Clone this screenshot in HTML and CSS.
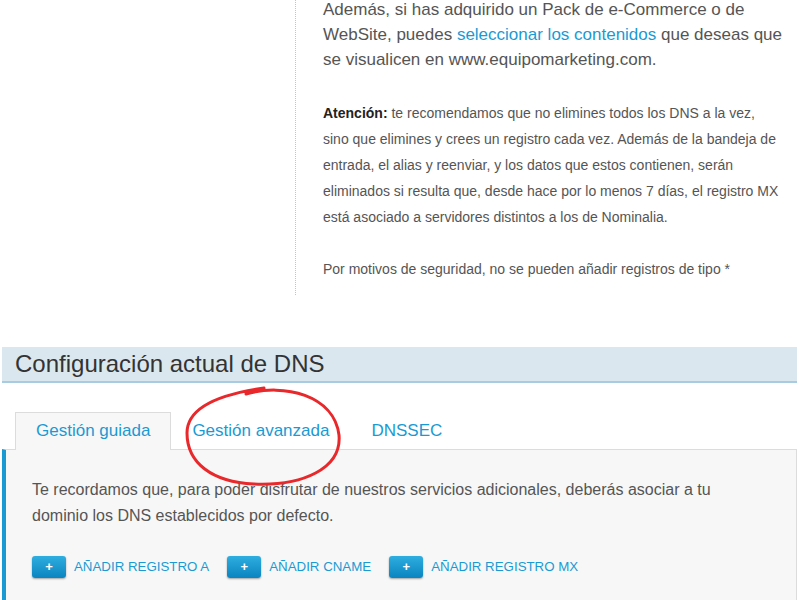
FILE: index.html
```html
<!DOCTYPE html>
<html lang="es">
<head>
  <meta charset="UTF-8" />
  <title>Configuración actual de DNS</title>
  <link rel="stylesheet" href="styles.css">
</head>
<body>

  <div class="intro">
    <div class="intro-side"></div>
    <div class="intro-text">
      <p class="lead">Además, si has adquirido un Pack de e-Commerce o de WebSite, puedes <a href="#">seleccionar los contenidos</a> que deseas que se visualicen en www.equipomarketing.com.</p>
      <p class="note"><b>Atención:</b> te recomendamos que no elimines todos los DNS a la vez, sino que elimines y crees un registro cada vez. Además de la bandeja de entrada, el alias y reenviar, y los datos que estos contienen, serán eliminados si resulta que, desde hace por lo menos 7 días, el registro MX está asociado a servidores distintos a los de Nominalia.</p>
      <p class="note">Por motivos de seguridad, no se pueden añadir registros de tipo *</p>
    </div>
  </div>

  <div class="dns">
    <h2 class="dns-title">Configuración actual de DNS</h2>

    <ul class="tabs">
      <li class="tab active"><a href="#">Gestión guiada</a></li>
      <li class="tab"><a href="#">Gestión avanzada</a></li>
      <li class="tab"><a href="#">DNSSEC</a></li>
    </ul>

    <div class="panel">
      <p>Te recordamos que, para poder disfrutar de nuestros servicios adicionales, deberás asociar a tu dominio los DNS establecidos por defecto.</p>
      <div class="actions">
        <a class="add" href="#"><span class="plus">+</span>Añadir registro A</a>
        <a class="add" href="#"><span class="plus">+</span>Añadir CNAME</a>
        <a class="add" href="#"><span class="plus">+</span>Añadir registro MX</a>
      </div>
    </div>

    <!-- hand drawn highlight -->
    <svg class="scribble" width="170" height="110" viewBox="0 0 170 110">
      <path d="M62 9 C 100 -2, 150 10, 155 50 C 158 84, 118 101, 70 99 C 28 97, 3 78, 3 48 C 3 24, 30 10, 80 3" fill="none" stroke="#e8282b" stroke-width="3" stroke-linecap="round"/>
    </svg>
  </div>

</body>
</html>
```

FILE: styles.css
```css
* {
  box-sizing: border-box;
  margin: 0;
  padding: 0;
}

body {
  font-family: 'Liberation Sans', Arial, sans-serif;
  color: #555;
  background: #fff;
  width: 800px;
  height: 600px;
  overflow: hidden;
}

a {
  color: #1a9ad3;
  text-decoration: none;
}

/* Top block with dotted divider */
.intro {
  display: flex;
  height: 295px;
}

.intro-side {
  width: 296px;
  border-right: 1px dotted #c4c4c4;
}

.intro-text {
  width: 500px;
  padding-left: 27px;
  margin-top: -3px;
}

.lead {
  font-size: 17px;
  line-height: 25px;
  margin-bottom: 28px;
}

.note {
  max-width: 457px;
  font-size: 14px;
  line-height: 26px;
  margin-bottom: 26px;
}

.note b {
  color: #222;
}

/* DNS configuration */
.dns {
  position: relative;
  margin: 52px 3px 0 2px;
}

.dns-title {
  font-size: 24px;
  font-weight: normal;
  color: #333;
  background: #dbe7ee;
  border-bottom: 2px solid #a9cbdf;
  height: 36px;
  line-height: 34px;
  padding-left: 13px;
}

.tabs {
  list-style: none;
  display: flex;
  margin-top: 29px;
  padding-left: 13px;
}

.tab {
  font-size: 17px;
  height: 37px;
  line-height: 36px;
  padding: 0 20px;
  border: 1px solid transparent;
  border-bottom: none;
}

.tab.active {
  background: #f7f7f7;
  border-color: #dcdcdc;
  margin-bottom: -1px;
  height: 38px;
  position: relative;
  z-index: 1;
}

.panel {
  background: #f7f7f7;
  border: 1px solid #dcdcdc;
  border-left: 4px solid #1a9ad3;
  padding: 27px 26px 30px;
  font-size: 16px;
  line-height: 26px;
  height: 160px;
}

.actions {
  display: flex;
  gap: 18px;
  margin-top: 25px;
}

.add {
  display: flex;
  align-items: center;
  gap: 8px;
  font-size: 13.3px;
  text-transform: uppercase;
}

.plus {
  display: inline-block;
  width: 34px;
  height: 22px;
  line-height: 21px;
  text-align: center;
  color: #fff;
  font-weight: bold;
  font-size: 13px;
  border-radius: 3px;
  background: linear-gradient(#2eaee0, #0b84bf);
  box-shadow: 0 1px 2px rgba(0, 0, 0, 0.35);
}

.scribble {
  position: absolute;
  left: 182px;
  top: 38px;
}
```
